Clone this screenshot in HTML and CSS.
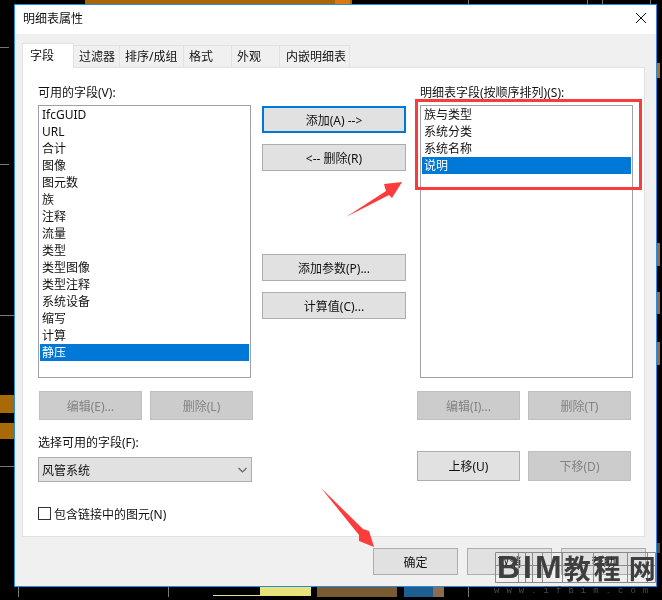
FILE: index.html
```html
<!DOCTYPE html>
<html>
<head>
    <meta charset="utf-8" />
    <title>明细表属性</title>
    <link rel="stylesheet" href="styles.css">
</head>
<body>
<section id="desktop">
    <!-- Bits of the drawing behind the dialog -->
    <div class="bg-bit top-band"></div>
    <div class="bg-bit top-glow"></div>
    <div class="bg-bit left-a"></div>
    <div class="bg-bit left-b"></div>
    <div class="bg-bit right-a"></div>
    <div class="bg-bit right-b"></div>
    <div class="bg-bit right-c"></div>
    <div class="bg-bit right-d"></div>
    <div class="bg-bit right-e"></div>
    <div class="bg-bit bottom-thin"></div>
    <div class="bg-bit bottom-a"></div>
    <div class="bg-bit bottom-b"></div>
    <div class="bg-bit bottom-c"></div>
    <div class="bg-bit bottom-d"></div>
    <svg class="bg-lines" width="662" height="600" viewBox="0 0 662 600"><path d="M0 47.5 H9 M0 164.5 H9 M0 315.5 H14 M0 466.5 H14 M468.5 0 V4 M587.5 0 V4 M602.5 0 V4 M650.5 0 V4 M18.5 587 V597 M168.5 587 V597 M468.5 587 V597" stroke="#777" stroke-width="1" fill="none"/></svg>

    <div class="dialog">
        <div class="title-bar">
            <span>明细表属性</span>
            <svg class="close" width="12" height="12" viewBox="0 0 12 12"><path d="M1 1 L11 11 M11 1 L1 11" stroke="#111" stroke-width="1" fill="none"/></svg>
        </div>
        <div class="dialog-body">
            <div class="tabs">
                <div class="tab active">字段</div>
                <div class="tab t-filter">过滤器</div>
                <div class="tab t-sort">排序/成组</div>
                <div class="tab t-format">格式</div>
                <div class="tab t-look">外观</div>
                <div class="tab t-embed">内嵌明细表</div>
            </div>
            <div class="panel">
                <div class="col col-left">
                    <label class="field-label">可用的字段(V):</label>
                    <ul class="list">
                        <li>IfcGUID</li>
                        <li>URL</li>
                        <li>合计</li>
                        <li>图像</li>
                        <li>图元数</li>
                        <li>族</li>
                        <li>注释</li>
                        <li>流量</li>
                        <li>类型</li>
                        <li>类型图像</li>
                        <li>类型注释</li>
                        <li>系统设备</li>
                        <li>缩写</li>
                        <li>计算</li>
                        <li class="selected">静压</li>
                    </ul>
                    <div class="btn-row left-row">
                        <button class="btn disabled">编辑(E)...</button>
                        <button class="btn disabled">删除(L)</button>
                    </div>
                    <label class="field-label select-label">选择可用的字段(F):</label>
                    <div class="select">
                        <span>风管系统</span>
                        <svg width="9" height="6" viewBox="0 0 9 6"><path d="M0.5 1 L4.5 5 L8.5 1" stroke="#666" stroke-width="1.2" fill="none"/></svg>
                    </div>
                    <div class="check-row">
                        <span class="checkbox"></span>
                        <span>包含链接中的图元(N)</span>
                    </div>
                </div>

                <div class="col col-mid">
                    <button class="btn wide primary">添加(A) --&gt;</button>
                    <button class="btn wide">&lt;-- 删除(R)</button>
                    <button class="btn wide params">添加参数(P)...</button>
                    <button class="btn wide">计算值(C)...</button>
                </div>

                <div class="col col-right">
                    <label class="field-label">明细表字段(按顺序排列)(S):</label>
                    <ul class="list">
                        <li>族与类型</li>
                        <li>系统分类</li>
                        <li>系统名称</li>
                        <li class="selected">说明</li>
                    </ul>
                    <div class="btn-row right-row">
                        <button class="btn disabled">编辑(I)...</button>
                        <button class="btn disabled">删除(T)</button>
                    </div>
                    <div class="btn-row right-row move-row">
                        <button class="btn">上移(U)</button>
                        <button class="btn disabled">下移(D)</button>
                    </div>
                </div>
            </div>
            <div class="footer">
                <button class="btn foot">确定</button>
                <button class="btn foot">取消</button>
                <button class="btn foot">帮助</button>
            </div>
        </div>
    </div>

    <!-- Annotations drawn over the screenshot -->
    <div class="red-box"></div>
    <svg class="arrow arrow-a" width="62" height="40" viewBox="0 0 62 40"><path d="M2 37 L42 11 L40 4 L58 2 L48 18 L45 15 Z" fill="#ff3b3b"/></svg>
    <svg class="arrow arrow-b" width="60" height="64" viewBox="0 0 60 64"><path d="M2 2 L44 43 L50 45 L55 61 L40 55 L40 49 Z" fill="#ff3b3b"/></svg>

    <div class="watermark">
        <svg class="wm-grid" width="162" height="32" viewBox="0 0 162 32"><path d="M1.5 1.5 H161.5 V31.5 H1.5 Z M24.5 1 V32 M31.5 1 V32 M38.5 1 V32 M48.5 1 V32 M68.5 1 V32 M99.5 1 V32 M133.5 1 V32 M153.5 1 V32 M1 14.5 H162" stroke="#8a8a8a" stroke-width="1" fill="none"/></svg>
        <div class="wm-title"><span class="wm-latin">BIM</span><span class="wm-cjk">教程</span><span class="wm-cjk wm-last">网</span></div>
        <div class="wm-url">www.ifbim.com</div>
    </div>
</section>
</body>
</html>
```

FILE: styles.css
```css
* {
    box-sizing: border-box;
}
html, body {
    margin: 0;
    background: #000;
}
body {
    font-family: "Noto Sans", "Noto Sans CJK SC", sans-serif;
    font-size: 12px;
    color: #111;
}
#desktop {
    position: relative;
    width: 662px;
    height: 600px;
    padding: 4px 5px 13px 14px;
    overflow: hidden;
    background: #000;
    filter: blur(0.4px);
}

/* background scraps */
.bg-bit {
    position: absolute;
}
.bg-lines {
    position: absolute;
    left: 0;
    top: 0;
}
.top-band { left: 85px; top: 0; width: 267px; height: 4px; background: #a8660a; }
.top-glow { left: 335px; top: 0; width: 15px; height: 4px; background: #d97a10; }
.left-a { left: 0; top: 395px; width: 14px; height: 18px; background: #a86a08; }
.left-b { left: 0; top: 423px; width: 14px; height: 16px; background: #a86a08; }
.right-a { left: 656px; top: 63px; width: 4px; height: 15px; background: #b0700c; }
.right-b { left: 656px; top: 243px; width: 4px; height: 23px; background: #96684a; }
.right-c { left: 656px; top: 292px; width: 4px; height: 22px; background: #96684a; }
.right-d { left: 656px; top: 342px; width: 4px; height: 23px; background: #96684a; }
.right-e { left: 656px; top: 543px; width: 4px; height: 10px; background: #5a4a30; }
.bottom-thin { left: 213px; top: 595px; width: 50px; height: 1px; background: #e8e27a; }
.bottom-a { left: 260px; top: 587px; width: 51px; height: 9px; background: #e8e27a; }
.bottom-b { left: 317px; top: 587px; width: 80px; height: 10px; background: #7a5a30; }
.bottom-c { left: 404px; top: 587px; width: 29px; height: 10px; background: #1c5f90; }
.bottom-d { left: 433px; top: 587px; width: 11px; height: 10px; background: #8a6d50; }

.dialog {
    position: relative;
    display: flex;
    flex-direction: column;
    width: 643px;
    height: 583px;
    border: 1px solid #2a8ae0;
    background: #f0f0f0;
}
.title-bar {
    display: flex;
    align-items: center;
    justify-content: space-between;
    height: 29px;
    padding: 0 9px 3px 8px;
    background: #fff;
}
.dialog-body {
    flex: 1;
    padding: 9px 10px 0 7px;
}

.tabs {
    display: flex;
    height: 24px;
    align-items: flex-end;
}
.tab {
    height: 22px;
    line-height: 21px;
    padding-left: 5px;
    background: #f0f0f0;
    border: 1px solid #e2e2e2;
    border-bottom: 0;
    margin-right: -1px;
}
.tab.active {
    width: 52px;
    height: 25px;
    line-height: 23px;
    padding-left: 7px;
    background: #fff;
    position: relative;
    z-index: 1;
    margin-bottom: -1px;
}
.t-filter { width: 47px; }
.t-sort { width: 65px; }
.t-format { width: 49px; }
.t-look { width: 49px; }
.t-embed { width: 71px; padding-left: 6px; }

.panel {
    display: flex;
    width: 623px;
    height: 470px;
    padding: 16px 0 0 15px;
    background: #fff;
    border: 1px solid #e2e2e2;
}
.col {
    display: flex;
    flex-direction: column;
}
.col-left, .col-right {
    width: 214px;
}
.col-mid {
    width: 144px;
    margin: 22px 14px 0 10px;
}
.field-label {
    height: 18px;
    line-height: 18px;
    margin-bottom: 3px;
    white-space: nowrap;
}
.list {
    list-style: none;
    margin: 0;
    padding: 0 1px;
    width: 213px;
    height: 273px;
    border: 1px solid #a0a0a8;
    background: #fff;
}
.list li {
    height: 17px;
    line-height: 18px;
    padding-left: 2px;
}
.list li.selected {
    background: #0078d7;
    color: #fff;
}

.btn {
    display: block;
    margin: 0;
    padding: 0;
    font: inherit;
    color: #111;
    background: #e1e1e1;
    border: 1px solid #adadad;
    white-space: nowrap;
}
.btn.disabled {
    background: #cccccc;
    border-color: #bfbfbf;
    color: #838383;
}
.btn.wide {
    width: 144px;
    height: 27px;
    margin-bottom: 11px;
}
.btn.primary {
    border: 2px solid #0078d7;
}
.btn.params {
    margin-top: 72px;
}
.btn-row {
    display: flex;
    gap: 8px;
    margin-top: 13px;
}
.btn-row .btn {
    width: 103px;
    height: 29px;
    flex: none;
}
.left-row {
    margin-left: 1px;
}
.right-row {
    margin-left: -3px;
}
.move-row {
    margin-top: 31px;
}
.move-row .btn {
    height: 30px;
}
.select-label {
    margin: 14px 0 5px;
}
.select {
    display: flex;
    align-items: center;
    justify-content: space-between;
    height: 25px;
    padding: 0 4px 0 3px;
    background: #e1e1e1;
    border: 1px solid #adadad;
}
.check-row {
    display: flex;
    align-items: center;
    gap: 3px;
    margin-top: 24px;
    height: 15px;
}
.checkbox {
    width: 13px;
    height: 13px;
    border: 1px solid #333;
    background: #fff;
}

.footer {
    display: flex;
    gap: 9px;
    margin: 11px 0 0 351px;
}
.btn.foot {
    width: 86px;
    height: 27px;
}

/* annotations */
.red-box {
    position: absolute;
    left: 415px;
    top: 99px;
    width: 227px;
    height: 91px;
    border: 3px solid #f83c3c;
}
.arrow {
    position: absolute;
}
.arrow-a { left: 344px; top: 180px; }
.arrow-b { left: 319px; top: 486px; }

.watermark {
    position: absolute;
    left: 494px;
    top: 551px;
    width: 162px;
    height: 49px;
}
.wm-grid {
    position: absolute;
    left: 0;
    top: 0;
}
.wm-title {
    position: relative;
    display: flex;
    align-items: center;
    height: 32px;
    padding-left: 3px;
    font-weight: 700;
    color: #3f3f3f;
    white-space: nowrap;
}
.wm-latin {
    font-family: "Liberation Sans", sans-serif;
    font-size: 32px;
    letter-spacing: 3px;
    margin-right: -1px;
}
.wm-cjk {
    font-size: 27px;
    letter-spacing: 3px;
}
.wm-last {
    margin-left: 5px;
}
.wm-url {
    position: relative;
    font-family: "Liberation Mono", monospace;
    font-size: 9px;
    line-height: 17px;
    letter-spacing: 7px;
    color: #4a4a4a;
    white-space: nowrap;
}
```
